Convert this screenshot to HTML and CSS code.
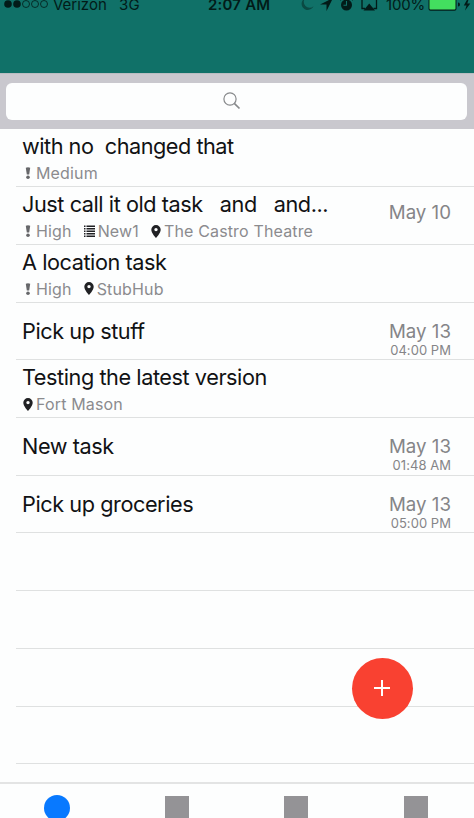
FILE: index.html
```html
<!DOCTYPE html>
<html lang="en">
<head>
<meta charset="utf-8">
<title>Tasks</title>
<link rel="stylesheet" href="styles.css">
</head>
<body>
<svg class="defs" width="0" height="0">
  <symbol id="bang" viewBox="0 0 6 12"><path d="M.8 .8Q3 -.4 5.200 .8L4.200 7.500H1.800Z"/><circle cx="3" cy="10.200" r="1.800"/></symbol>
  <symbol id="pin" viewBox="0 0 10 13"><path fill-rule="evenodd" d="M5 0a4.700 4.700 0 0 0-4.700 4.700C.3 8 5 13 5 13s4.700-5 4.700-8.300A4.700 4.700 0 0 0 5 0ZM5 2.900a1.700 1.700 0 1 1 0 3.400a1.700 1.700 0 0 1 0-3.400Z"/></symbol>
  <symbol id="list" viewBox="0 0 11 13"><path d="M0 .5h1.500v1.400H0zM2.500 .5H11v1.400H2.500zM0 3h1.500v1.400H0zM2.500 3H11v1.400H2.500zM0 5.500h1.500v1.400H0zM2.500 5.500H11v1.400H2.500zM0 8h1.500v1.400H0zM2.500 8H11v1.400H2.500zM0 10.500h1.500v1.400H0zM2.500 10.500H11v1.400H2.500z"/></symbol>
</svg>
<div class="screen">
  <header class="navbar">
    <div class="status">
      <svg class="signal" width="44" height="10" viewBox="0 0 44 10"><circle cx="4" cy="5" r="3.800"/><circle cx="13" cy="5" r="3.800"/><g fill="none" stroke="#021b18" stroke-width=".8"><circle cx="22" cy="5" r="3.500"/><circle cx="31" cy="5" r="3.500"/><circle cx="40" cy="5" r="3.500"/></g></svg>
      <span class="carrier">Verizon</span>
      <span class="network">3G</span>
      <span class="clock">2:07 AM</span>
      <svg class="glyphs" width="78" height="18" viewBox="0 0 78 18">
        <path fill="#0a4a43" d="M4.500 3A6.200 6.200 0 1 0 12.500 11.200A5.500 5.500 0 0 1 4.500 3Z"/>
        <path d="M32 3L19 9.500H25.500V16Z"/>
        <circle cx="45.500" cy="10" r="5.500"/><path d="M40 2l3 0l-4 4zM51 2l-3 0l4 4z"/><path fill="none" stroke="#107168" stroke-width="1.100" d="M45.500 6v4.200H42.500"/>
        <path fill="none" stroke="#021b18" stroke-width="1.300" d="M64 13.500H61V2H75.500V13.500H72.500"/><path d="M68.200 8.500L74 15.500H62.500Z"/>
      </svg>
      <span class="percent">100%</span>
      <svg class="battery" width="43" height="18" viewBox="0 0 43 18"><rect x=".5" y="1" width="28" height="14.800" rx="2"/><rect x="1.500" y="2" width="26" height="12.500" rx="1" fill="#43df5f"/><path d="M30 7.500q2 0 2 2t-2 2z"/><path d="M40 3L35.800 10.500H38.500L37 15.500L42.300 8.500H39.300L41 3Z"/></svg>
    </div>
  </header>
  <div class="searchbar"><div class="field">
    <svg width="18" height="18" viewBox="0 0 18 18" fill="none" stroke="#87898b"><circle cx="7" cy="7" r="6.100" stroke-width="1.200"/><path d="M11.300 11.300L16.500 16.500" stroke-width="1.700"/></svg>
  </div></div>
  <main class="tasks">
    <div class="row">
      <div class="info"><div class="title tight">with no  changed that</div>
        <div class="meta"><span class="tag"><svg class="bang"><use href="#bang"/></svg>Medium</span></div></div>
    </div>
    <div class="row">
      <div class="info"><div class="title">Just call it old task   and   and...</div>
        <div class="meta"><span class="tag"><svg class="bang"><use href="#bang"/></svg>High</span><span class="tag"><svg class="list"><use href="#list"/></svg>New1</span><span class="tag"><svg class="pin"><use href="#pin"/></svg>The Castro Theatre</span></div></div>
      <div class="due day-only"><div class="date">May 10</div></div>
    </div>
    <div class="row">
      <div class="info"><div class="title">A location task</div>
        <div class="meta"><span class="tag"><svg class="bang"><use href="#bang"/></svg>High</span><span class="tag"><svg class="pin"><use href="#pin"/></svg>StubHub</span></div></div>
    </div>
    <div class="row">
      <div class="info single"><div class="title">Pick up stuff</div></div>
      <div class="due"><div class="date">May 13</div><div class="time">04:00 PM</div></div>
    </div>
    <div class="row">
      <div class="info"><div class="title">Testing the latest version</div>
        <div class="meta"><span class="tag place"><svg class="pin"><use href="#pin"/></svg>Fort Mason</span></div></div>
    </div>
    <div class="row">
      <div class="info single"><div class="title">New task</div></div>
      <div class="due"><div class="date">May 13</div><div class="time">01:48 AM</div></div>
    </div>
    <div class="row">
      <div class="info single"><div class="title">Pick up groceries</div></div>
      <div class="due"><div class="date">May 13</div><div class="time">05:00 PM</div></div>
    </div>
    <div class="row"></div><div class="row"></div><div class="row"></div><div class="row"></div>
  </main>
  <button class="add" aria-label="Add"><svg width="16" height="16" viewBox="0 0 16 16"><path d="M8 0V16M0 8H16" stroke="#fff" stroke-width="2"/></svg></button>
  <nav class="tabs"><i class="tab active"></i><i class="tab"></i><i class="tab"></i><i class="tab"></i></nav>
</div>
</body>
</html>
```
FILE: styles.css
```css
* { box-sizing: border-box; }
body { margin: 0; font-family: Inter, "Liberation Sans", sans-serif; background: #fdfefe; color: #111214; }
.defs { position: absolute; }
svg { display: block; flex: none; }
.screen { position: relative; width: 474px; height: 818px; overflow: hidden; display: flex; flex-direction: column; }
.navbar { height: 73px; flex: none; background: #107168; }
.status { display: flex; align-items: center; height: 20px; margin-top: -5px; color: #021b18; fill: #021b18; font-size: 15px; line-height: 20px; white-space: nowrap; }
.signal, .glyphs, .battery { margin-top: -2px; }
.signal { margin-left: 4px; margin-right: 5px; }
.carrier { width: 66px; letter-spacing: 0; }
.network { width: 89px; letter-spacing: .2px; }
.clock { width: 93px; font-weight: 600; letter-spacing: .2px; }
.glyphs { width: 78px; }
.percent { width: 42px; margin-left: 7px; letter-spacing: -.2px; }
.battery { width: 43px; }
.searchbar { height: 56.400px; flex: none; padding: 9px 7px 10px 6px; background: #c9c8ce; border-top: 1px solid #b9bdc1; }
.field { height: 36.500px; border-radius: 6px; background: #fdfefe; display: flex; align-items: center; justify-content: center; padding-right: 9px; }
.tasks { height: 653.100px; flex: none; overflow: hidden; }
.row { height: 57.720px; margin-left: 15.500px; border-bottom: 1px solid #dfe1e1; display: flex; justify-content: space-between; padding-left: 6.500px; padding-right: 23px; }
.info { padding-top: 3px; }
.single { padding-top: 14.500px; }
.title { font-size: 21.700px; line-height: 28px; letter-spacing: -.44px; white-space: pre; }
.tight { letter-spacing: -.48px; }
.meta { display: flex; gap: 12px; font-size: 16px; line-height: 20px; margin-top: 3px; color: #8b8b8e; white-space: nowrap; letter-spacing: .15px; }
.tag { display: flex; align-items: center; }
.bang { width: 6px; height: 12px; margin: 0 5px 0 3px; fill: #66676a; }
.pin { width: 10px; height: 13px; margin: 0 3px 0 0; fill: #202124; }
.place .pin { margin: 0 3px 0 1px; }
.list { width: 11px; height: 13px; margin: 0 3px 0 0; fill: #202124; }
.due { padding-top: 17.500px; text-align: right; color: #858588; white-space: nowrap; }
.day-only { padding-top: 14px; }
.date { font-size: 18.700px; line-height: 24px; }
.time { font-size: 13px; line-height: 13px; letter-spacing: .05px; }
.add { position: absolute; left: 351.500px; top: 657.500px; width: 61px; height: 61px; border: 0; padding: 0; border-radius: 50%; background: #f94131; display: flex; align-items: center; justify-content: center; }
.tabs { flex: 1; border-top: 2px solid #e3e4e4; display: grid; grid-template-columns: repeat(4, 119.800px); justify-content: center; padding: 11px 1px 0 0; }
.tab { width: 24px; height: 24px; background: #949396; justify-self: center; margin-top: 1px; }
.active { width: 26px; height: 26px; margin-top: 0; border-radius: 50%; background: #0879ff; }
```
